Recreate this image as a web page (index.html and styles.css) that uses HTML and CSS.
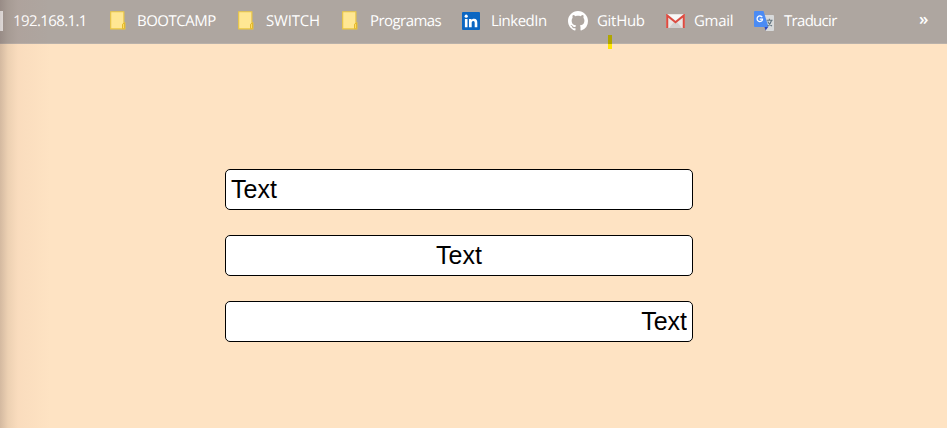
FILE: index.html
```html
<!DOCTYPE html>
<html lang="es">
<head>
<meta charset="utf-8">
<title>Text</title>
<link rel="stylesheet" href="styles.css">
</head>
<body>
<svg class="defs" width="0" height="0">
  <symbol id="folder" viewBox="0 0 16 19">
    <path d="M.7.7h13.2v11.2h1v6H.7z" fill="#ffe793" stroke="#eac642" stroke-width="1.1"/>
    <path d="M12.5 17.7v-4.5l2-1.3v5.8z" fill="#ffdb63" stroke="#e3b92d"/>
  </symbol>
</svg>
<nav class="bar">
  <a class="item first"><span class="tick"></span><span class="label ip">192.168.1.1</span></a>
  <a class="item"><svg class="icon folder"><use href="#folder"/></svg><span class="label bootcamp">BOOTCAMP</span></a>
  <a class="item"><svg class="icon folder"><use href="#folder"/></svg><span class="label switch">SWITCH</span></a>
  <a class="item"><svg class="icon folder"><use href="#folder"/></svg><span class="label programas">Programas</span></a>
  <a class="item"><svg class="icon linkedin" viewBox="0 0 18 18">
    <rect width="18" height="18" rx="1" fill="#0b66c2"/>
    <circle cx="4.2" cy="4.2" r="1.6" fill="#fff"/>
    <path d="M2.9 7h2.6v8.3H2.9zM7 7h2.5v1.1c.5-.8 1.4-1.3 2.6-1.3 2.6 0 3.2 1.7 3.2 4v4.5h-2.6v-4c0-1.2-.1-2.3-1.4-2.3s-1.6 1-1.6 2.2v4.1H7z" fill="#fff"/>
  </svg><span class="label in">LinkedIn</span></a>
  <a class="item"><svg class="icon github" viewBox="0 0 16 16">
    <path fill="#fff" d="M8 0C3.58 0 0 3.58 0 8c0 3.54 2.29 6.53 5.47 7.59.4.07.55-.17.55-.38 0-.19-.01-.82-.01-1.49-2.01.37-2.53-.49-2.69-.94-.09-.23-.48-.94-.82-1.13-.28-.15-.68-.52-.01-.53.63-.01 1.08.58 1.23.82.72 1.21 1.87.87 2.33.66.07-.52.28-.87.51-1.07-1.78-.2-3.64-.89-3.64-3.95 0-.87.31-1.59.82-2.15-.08-.2-.36-1.02.08-2.12 0 0 .67-.21 2.2.82.64-.18 1.32-.27 2-.27s1.36.09 2 .27c1.53-1.04 2.2-.82 2.2-.82.44 1.1.16 1.92.08 2.12.51.56.82 1.27.82 2.15 0 3.07-1.87 3.75-3.65 3.95.29.25.54.73.54 1.48 0 1.07-.01 1.93-.01 2.2 0 .21.15.46.55.38A8.01 8.01 0 0 0 16 8c0-4.42-3.58-8-8-8z"/>
  </svg><span class="label hub">GitHub</span></a>
  <a class="item"><svg class="icon gmail" viewBox="0 0 19 14">
    <rect width="19" height="14" rx="1.2" fill="#e8e6e4"/>
    <path d="M3 14l5-6 1.5 1.2L11 8l5 6z" fill="#d2d0cf"/>
    <path d="M2.5 1h14l-7 5.5z" fill="#f8f8f8"/>
    <path d="M1.2 14V1.5l8.3 6.7 8.3-6.7V14" fill="none" stroke="#dc4b40" stroke-width="2.1"/>
  </svg><span class="label mail">Gmail</span></a>
  <a class="item"><svg class="icon translate" viewBox="0 0 20 20">
    <path d="M8 4h11q1 0 1 1v14q0 1-1 1h-7z" fill="#d8dadb"/>
    <path d="M10.5 16h3.7L11.6 19.4z" fill="#3048bd"/>
    <path d="M1 0h8.5l5 16H1q-1 0-1-1V1q0-1 1-1z" fill="#4b8bf4"/>
    <path d="M8.2 6.2A2.8 2.8 0 1 0 8.4 9V8.2H5.7" fill="none" stroke="#fff" stroke-width="1.3"/>
    <path d="M12.6 9.3h6M15.4 7.7v1.6M17.5 9.5q-.8 3.3-4 5.6M13.7 10.5q1.4 3 4.3 4.4" fill="none" stroke="#637681" stroke-width="1.1"/>
  </svg><span class="label tr">Traducir</span></a>
  <span class="more">»</span>
</nav>
<span class="mark"></span>
<main class="fields">
  <input class="field left" type="text" value="Text">
  <input class="field center" type="text" value="Text">
  <input class="field right" type="text" value="Text">
</main>
<div class="shade"></div>
</body>
</html>
```
FILE: styles.css
```css
* { box-sizing: border-box; }
body {
  margin: 0;
  height: 428px;
  overflow: hidden;
  position: relative;
  background: #fee3c3;
  font-family: "Open Sans", "Noto Sans", sans-serif;
}
.defs { position: absolute; }
.bar {
  display: grid;
  grid-template-columns: 110px 128px 104px 120px 106px 98px 88px 165px 28px;
  height: 44px;
  padding-bottom: 2px;
  background: #aea6a0;
  border-bottom: 1px solid #b9b1aa;
  color: #fff;
  font-size: 15px;
  text-rendering: geometricPrecision;
}
.item { display: flex; align-items: center; white-space: nowrap; }
.tick { width: 3px; height: 20px; margin-right: 10px; background: #fff; }
.icon { flex: none; display: block; }
.folder { width: 16px; height: 19px; margin-right: 12px; }
.linkedin { width: 18px; height: 18px; margin-right: 11px; }
.github { width: 20px; height: 20px; margin-right: 9px; }
.gmail { width: 19px; height: 14px; margin-right: 9px; }
.translate { width: 20px; height: 20px; margin-right: 10px; }
.ip { letter-spacing: -0.6px; }
.bootcamp { letter-spacing: -0.5px; margin-left: -1px; }
.switch { letter-spacing: -0.2px; }
.programas { letter-spacing: -0.55px; }
.in { letter-spacing: -0.5px; }
.hub, .mail { letter-spacing: -0.3px; }
.tr { letter-spacing: -0.7px; }
.more { font-size: 17px; font-weight: 600; line-height: 37px; }
.mark {
  position: absolute;
  left: 608px;
  top: 35px;
  width: 4px;
  height: 14px;
  background: linear-gradient(#b0a600 9px, #ffe600 9px);
}
.fields {
  display: flex;
  flex-direction: column;
  gap: 25px;
  width: 468px;
  margin: 125px 0 0 225px;
}
.field {
  width: 100%;
  height: 41px;
  padding: 0 5px;
  border: 1px solid #000;
  border-radius: 5px;
  background: #fff;
  color: #000;
  font: 25px "Liberation Sans", Arial, sans-serif;
  outline: none;
}
.left { text-align: left; }
.center { text-align: center; }
.right { text-align: right; }
.shade {
  position: absolute;
  inset: 0 auto 0 0;
  width: 50px;
  pointer-events: none;
  background: linear-gradient(90deg, rgba(90, 65, 60, .26), rgba(110, 75, 60, .12) 8px, rgba(180, 110, 100, .06) 18px, rgba(200, 130, 110, 0));
}
```
